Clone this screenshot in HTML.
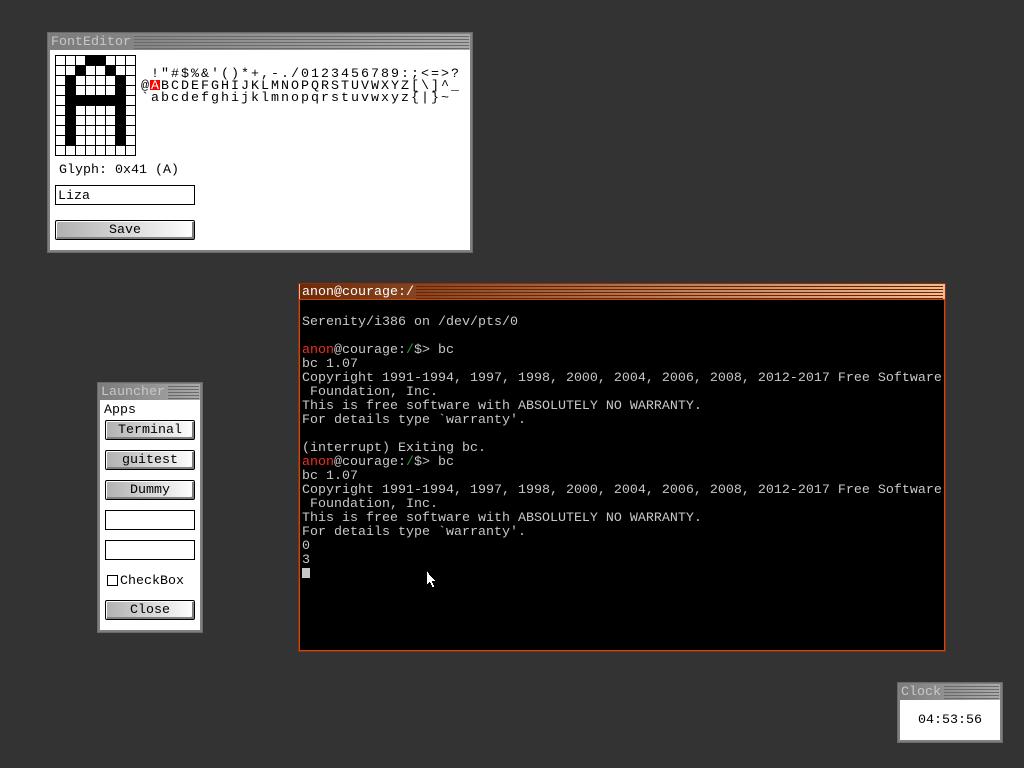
<!DOCTYPE html>
<html><head><meta charset="utf-8"><style>
html,body{margin:0;padding:0;width:1024px;height:768px;overflow:hidden;background:#333}
body{position:relative;font-family:"Liberation Mono",monospace;font-size:13.33px;line-height:14px;color:#000}
div,span,pre{box-sizing:border-box}
.a{position:absolute;white-space:pre;margin:0}
.win{position:absolute;background:#808080;border:1px solid #6a6a6a}
.tb{position:absolute;height:16px;background:linear-gradient(90deg,#7c7c7c,#aaa)}
.st{position:absolute;background:repeating-linear-gradient(180deg,#6a6a6a 0,#6a6a6a 1px,transparent 1px,transparent 3px)}
.tt{color:#c8c8c8}
.w{position:absolute;background:#fff}
.btn{position:absolute;width:90px;height:20px;border:1px solid #000;border-radius:2px;background:linear-gradient(90deg,#b0b0b0,#fff);box-shadow:inset 1px 1px 0 #fff,inset -2px -2px 0 #808080;text-align:center;line-height:20px;color:#000}
.box{position:absolute;width:90px;height:20px;border:1px solid #000;background:#fff}
.fm{position:absolute;left:141px;letter-spacing:2px;white-space:pre;line-height:12px;color:#000}
</style></head><body>

<div class="win" style="left:47px;top:32px;width:426px;height:221px">
  <div class="tb" style="left:2px;top:1px;width:420px"></div>
  <div class="st" style="left:86px;top:3px;width:335px;height:13px"></div>
  <div class="a tt" style="left:3px;top:3px">FontEditor</div>
</div>
<div class="w" style="left:50px;top:50px;width:420px;height:200px"></div>
<svg class="a" style="left:55px;top:55px" width="81" height="101" viewBox="0 0 81 101" shape-rendering="crispEdges">
  <rect width="81" height="101" fill="#fff"/>
  <path fill="#000" d="M30 0h20v10H30zM20 10h10v10H20zM50 10h10v10H50zM10 20h10v70H10zM60 20h10v70H60zM10 40h60v10H10z"/>
  <path stroke="#000" stroke-width="1" fill="none" d="M.5 0v101M10.5 0v101M20.5 0v101M30.5 0v101M40.5 0v101M50.5 0v101M60.5 0v101M70.5 0v101M80.5 0v101M0 .5h81M0 10.5h81M0 20.5h81M0 30.5h81M0 40.5h81M0 50.5h81M0 60.5h81M0 70.5h81M0 80.5h81M0 90.5h81M0 100.5h81"/>
</svg>
<div class="a" style="left:150px;top:80px;width:10px;height:10px;background:#f00"></div>
<div class="fm" style="top:69px"> !"#$%&amp;'()*+,-./0123456789:;&lt;=&gt;?</div>
<div class="fm" style="top:81px">@<span style="color:#fff">A</span>BCDEFGHIJKLMNOPQRSTUVWXYZ[\]^_</div>
<div class="fm" style="top:93px">`abcdefghijklmnopqrstuvwxyz{|}~</div>
<div class="a" style="left:59px;top:164px">Glyph: 0x41 (A)</div>
<div class="box" style="left:55px;top:185px;width:140px"></div>
<div class="a" style="left:58px;top:190px">Liza</div>
<div class="btn" style="left:55px;top:220px;width:140px">Save</div>

<div class="win" style="left:97px;top:382px;width:106px;height:251px">
  <div class="tb" style="left:2px;top:1px;width:100px"></div>
  <div class="st" style="left:70px;top:3px;width:31px;height:13px"></div>
  <div class="a tt" style="left:3px;top:3px">Launcher</div>
</div>
<div class="w" style="left:100px;top:400px;width:100px;height:230px"></div>
<div class="a" style="left:104px;top:404px">Apps</div>
<div class="btn" style="left:105px;top:420px">Terminal</div>
<div class="btn" style="left:105px;top:450px">guitest</div>
<div class="btn" style="left:105px;top:480px">Dummy</div>
<div class="box" style="left:105px;top:510px"></div>
<div class="box" style="left:105px;top:540px"></div>
<div class="a" style="left:107px;top:575px;width:11px;height:11px;border:1px solid #000"></div>
<div class="a" style="left:120px;top:575px">CheckBox</div>
<div class="btn" style="left:105px;top:600px">Close</div>

<div class="win" style="left:897px;top:682px;width:106px;height:61px">
  <div class="tb" style="left:2px;top:1px;width:100px"></div>
  <div class="st" style="left:46px;top:3px;width:55px;height:13px"></div>
  <div class="a tt" style="left:3px;top:3px">Clock</div>
</div>
<div class="w" style="left:900px;top:700px;width:100px;height:40px"></div>
<div class="a" style="left:918px;top:714px">04:53:56</div>

<div class="win" style="left:298px;top:283px;width:648px;height:369px;background:#e8b898;border:1px solid #8a3010;outline:0">
  <div class="tb" style="left:1px;top:0;width:644px;height:16px;background:linear-gradient(90deg,#6e2a06,#f0bc90)"></div>
  <div class="st" style="left:117px;top:2px;width:527px;height:13px;background:repeating-linear-gradient(180deg,#6e2200 0,#6e2200 1px,transparent 1px,transparent 3px)"></div>
  <div class="a" style="left:3px;top:2px;color:#fff">anon@courage:/</div>
</div>
<div class="a" style="left:299px;top:299px;width:646px;height:352px;background:#000;border:1px solid #c04a10"></div>
<pre class="a" style="left:302px;top:302px;color:#c8c8c8;font:13.33px/14px 'Liberation Mono',monospace">

Serenity/i386 on /dev/pts/0

<span style="color:#f03020">anon</span>@courage:<span style="color:#20a040">/</span>$&gt; bc
bc 1.07
Copyright 1991-1994, 1997, 1998, 2000, 2004, 2006, 2008, 2012-2017 Free Software
 Foundation, Inc.
This is free software with ABSOLUTELY NO WARRANTY.
For details type `warranty'.

(interrupt) Exiting bc.
<span style="color:#f03020">anon</span>@courage:<span style="color:#20a040">/</span>$&gt; bc
bc 1.07
Copyright 1991-1994, 1997, 1998, 2000, 2004, 2006, 2008, 2012-2017 Free Software
 Foundation, Inc.
This is free software with ABSOLUTELY NO WARRANTY.
For details type `warranty'.
0
3</pre>
<div class="a" style="left:302px;top:568px;width:8px;height:10px;background:#c8c8c8"></div>
<svg class="a" style="left:426px;top:570px" width="13" height="18" viewBox="0 0 13 18" shape-rendering="crispEdges"><path fill="#fff" d="M1 1v13h1v-1h1v-1h1v1h1v2h1v2h2v-2h-1v-2h-1v-2h3v-1h-1v-1h-1v-1h-1v-1h-1v-1h-1v-1h-1v-1z"/></svg>
</body></html>
